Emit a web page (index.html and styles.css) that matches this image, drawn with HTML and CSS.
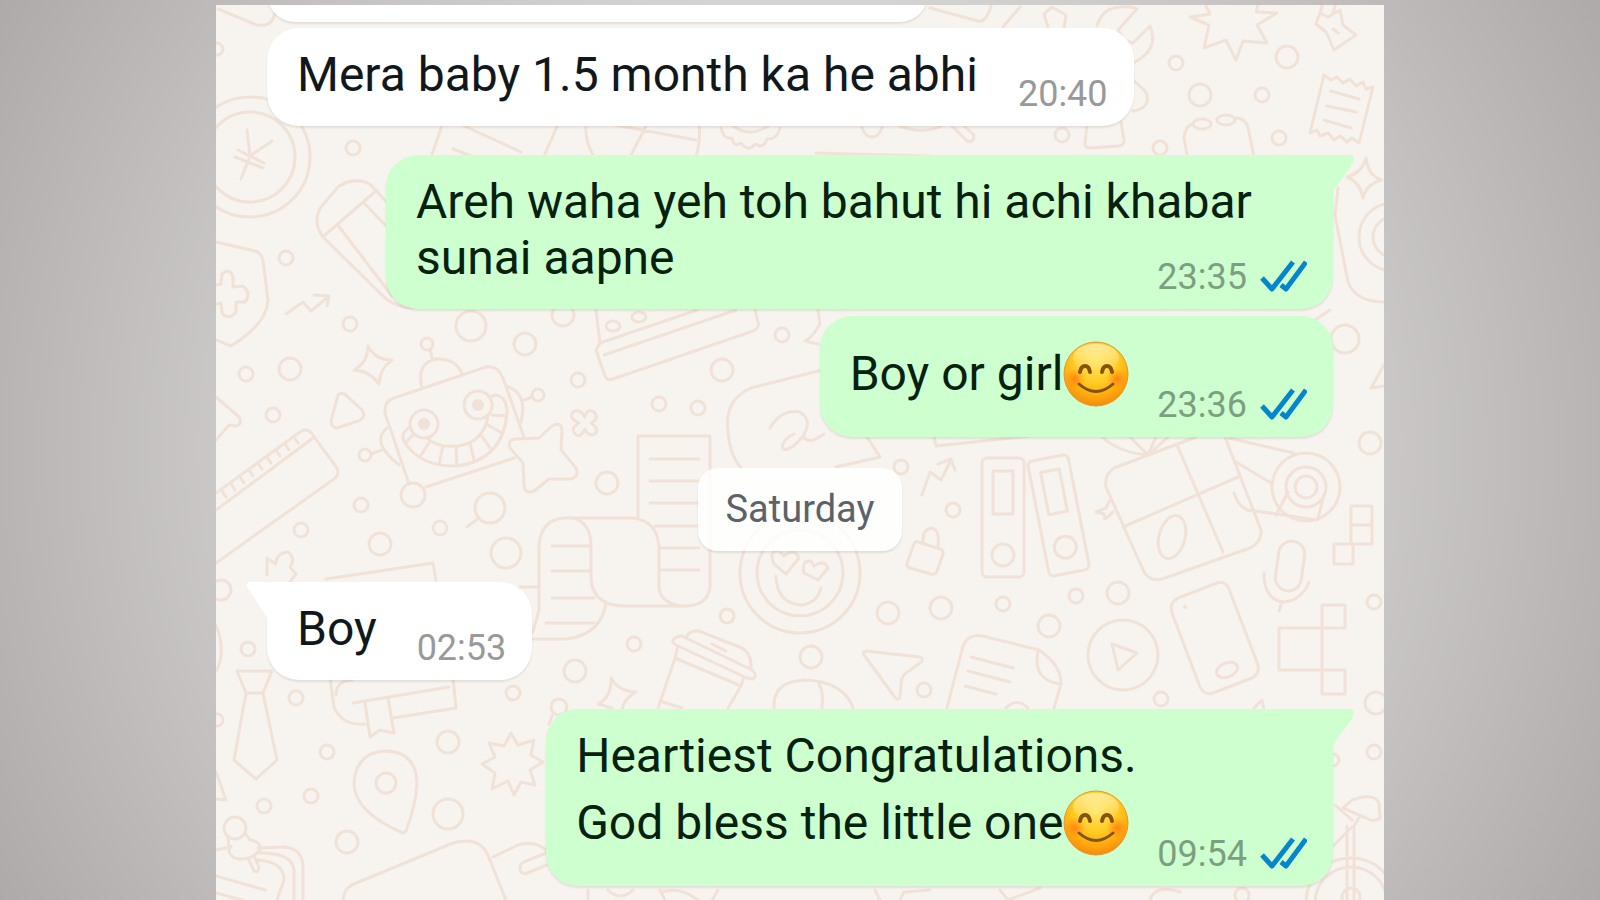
FILE: index.html
```html
<!DOCTYPE html>
<html lang="en">
<head>
  <meta charset="UTF-8" />
  <meta name="viewport" content="width=device-width, initial-scale=1.0"/>
  <title>Chat</title>
  <link rel="stylesheet" href="styles.css">
</head>
<body>
  <!-- Shared icons -->
  <svg class="defs" width="0" height="0" aria-hidden="true">
    <defs>
      <radialGradient id="face" cx="50%" cy="30%" r="70%">
        <stop offset="0" stop-color="#ffe45e"/>
        <stop offset="0.5" stop-color="#ffcb22"/>
        <stop offset="0.8" stop-color="#ffa60c"/>
        <stop offset="1" stop-color="#f08a10"/>
      </radialGradient>
      <radialGradient id="cheek">
        <stop offset="0" stop-color="#ff7a12" stop-opacity="0.85"/>
        <stop offset="1" stop-color="#ff8a10" stop-opacity="0"/>
      </radialGradient>
      <linearGradient id="shine" x1="0" y1="0" x2="0" y2="1">
        <stop offset="0" stop-color="#fff6c4" stop-opacity="0.7"/>
        <stop offset="1" stop-color="#fff6c4" stop-opacity="0"/>
      </linearGradient>
    </defs>
    <symbol id="smile" viewBox="0 0 66 66">
      <circle cx="33" cy="33" r="32" fill="url(#face)" stroke="#e29a2c" stroke-width="1"/>
      <ellipse cx="33" cy="17" rx="23" ry="14" fill="url(#shine)"/>
      <circle cx="12" cy="38" r="11" fill="url(#cheek)"/>
      <circle cx="54" cy="38" r="11" fill="url(#cheek)"/>
      <path d="M17 31 Q18 25 22 25 Q26 25 27 31 M39 31 Q40 25 44 25 Q48 25 49 31" fill="none" stroke="#85530f" stroke-width="4" stroke-linecap="round"/>
      <path d="M16 43 Q33 58 50 43" fill="none" stroke="#85530f" stroke-width="3" stroke-linecap="round"/>
    </symbol>
    <symbol id="ticks" viewBox="0 0 47 36">
      <path d="M2 19 L12 30 L33 3 M21 26 L26 30 L46 3" fill="none" stroke="#0785cc" stroke-width="5" stroke-linejoin="round"/>
    </symbol>
  </svg>

  <main class="chat">
    <!-- Wallpaper doodles -->
    <svg class="wallpaper" viewBox="216 5 1168 895" preserveAspectRatio="xMidYMin slice" aria-hidden="true">
      <!-- bubbles -->
      <g>
        <circle cx="350" cy="324" r="7"/><circle cx="471" cy="326" r="15"/><circle cx="525" cy="344" r="11"/>
        <circle cx="563" cy="315" r="11"/><circle cx="246" cy="374" r="7"/><circle cx="290" cy="369" r="11"/>
        <circle cx="273" cy="415" r="7"/><circle cx="578" cy="380" r="7"/><circle cx="659" cy="404" r="7"/>
        <circle cx="698" cy="408" r="7"/><circle cx="722" cy="370" r="11"/><circle cx="782" cy="335" r="7"/>
        <circle cx="607" cy="483" r="11"/><circle cx="361" cy="505" r="7"/><circle cx="490" cy="508" r="15"/>
        <circle cx="301" cy="530" r="7"/><circle cx="440" cy="528" r="7"/><circle cx="380" cy="544" r="11"/>
        <circle cx="506" cy="553" r="15"/><circle cx="221" cy="590" r="10"/><circle cx="727" cy="616" r="7"/>
        <circle cx="353" cy="148" r="7"/><circle cx="286" cy="258" r="7"/><circle cx="217" cy="49" r="6"/>
        <circle cx="1176" cy="63" r="7"/><circle cx="1287" cy="57" r="11"/><circle cx="1200" cy="95" r="11"/>
        <circle cx="1262" cy="95" r="7"/><circle cx="1062" cy="135" r="7"/><circle cx="1160" cy="148" r="7"/>
        <circle cx="1279" cy="138" r="7"/><circle cx="1345" cy="339" r="14"/><circle cx="1370" cy="443" r="11"/>
        <circle cx="901" cy="467" r="7"/><circle cx="953" cy="510" r="7"/><circle cx="888" cy="613" r="11"/>
        <circle cx="941" cy="608" r="11"/><circle cx="1003" cy="604" r="7"/><circle cx="1076" cy="596" r="7"/>
        <circle cx="1118" cy="593" r="11"/><circle cx="1049" cy="626" r="11"/><circle cx="1374" cy="602" r="7"/>
        <circle cx="248" cy="649" r="7"/><circle cx="296" cy="698" r="7"/><circle cx="513" cy="693" r="7"/>
        <circle cx="575" cy="671" r="11"/><circle cx="634" cy="644" r="7"/><circle cx="327" cy="752" r="7"/>
        <circle cx="448" cy="742" r="11"/><circle cx="311" cy="796" r="7"/><circle cx="264" cy="806" r="7"/>
        <circle cx="448" cy="814" r="15"/><circle cx="347" cy="842" r="11"/><circle cx="217" cy="720" r="6"/>
        <circle cx="559" cy="707" r="8"/><circle cx="811" cy="657" r="11"/><circle cx="924" cy="690" r="7"/>
        <circle cx="1161" cy="699" r="7"/><circle cx="1376" cy="703" r="11"/><circle cx="1374" cy="752" r="7"/>
        <circle cx="1242" cy="895" r="7"/><circle cx="1333" cy="760" r="6"/>
        <path d="M479 518 L467 527"/>
      </g>
      <!-- coin -->
      <circle cx="250" cy="157" r="60"/><circle cx="250" cy="157" r="45"/>
      <path d="M247 130 L250 156 L272 141 M250 156 L241 179 M235 157 L263 168 M238 150 L264 163"/>
      <path d="M218 9 L257 25 Q272 28 275 13"/>
      <!-- phone -->
      <path d="M414 308 Q398 308 385 298 L323 237 Q312 222 321 207 L338 187 Q354 176 370 184 L392 208 M325 235 L377 190 M363 202 L392 232 M337 224 L392 296"/>
      <!-- shield and arrow -->
      <path d="M216 242 L255 251 Q262 253 263 261 L268 300 Q267 324 231 346 L216 340"/>
      <path d="M216 285 L221 284 L222 274 Q230 267 233 277 L233 287 L243 286 Q252 293 245 302 L236 302 L236 312 Q229 321 222 313 L221 303 L216 304"/>
      <path d="M286 314 L303 302 L311 311 L328 297 M314 295 L329 296 L327 306"/>
      <!-- strip under the first message -->
      <path d="M444 120 L431 157 M460 124 L521 152 M560 120 L544 156 M453 149 L474 157 M586 120 Q584 140 594 157 M615 125 L696 140 M646 126 L630 157 M699 120 Q701 140 696 157"/>
      <path d="M721 128 Q724 140 732 138 Q734 148 741 143 Q749 153 755 144 Q764 149 767 139 Q777 140 780 128 M733 126 Q750 138 768 126"/>
      <path d="M861 124 Q864 137 872 137 Q880 137 883 124 M900 126 Q925 136 945 124 M950 124 L967 141 Q974 143 974 135 L962 124 M816 153 L930 156"/>
      <path d="M1087 122 L1085 144 Q1085 148 1090 148 L1118 146 Q1124 146 1124 140 L1121 122 M1187 155 L1184 138 Q1185 126 1193 124"/>
      <ellipse cx="1202" cy="124" rx="9" ry="5"/><ellipse cx="1226" cy="120" rx="9" ry="5"/>
      <path d="M1235 118 Q1246 118 1248 128 L1254 156"/>
      <!-- receipt -->
      <path d="M1324 75 L1331 80 L1337 77 L1343 83 L1350 79 L1356 86 L1363 82 L1366 89 L1373 87 L1359 143 L1352 138 L1347 142 L1340 136 L1334 140 L1328 133 L1320 136 L1317 130 L1310 133 Z M1331 91 L1359 99 M1327 106 L1356 112 M1324 120 L1351 128"/>
      <!-- wrench, burst, pin -->
      <path d="M1097 26 Q1102 8 1120 7 Q1132 6 1137 9 L1118 30 Q1124 42 1133 43 L1150 26 Q1160 50 1133 63 M1131 78 L1146 92 Q1152 108 1133 111"/>
      <path d="M1206 6 L1210 14 L1190 17 L1209 25 L1204 48 L1226 40 L1236 60 L1243 41 L1267 43 L1257 25 L1277 13 L1256 12 L1258 5"/>
      <path d="M1322 6 L1320 13 L1328 17 L1340 10 L1343 25 L1356 35 L1334 50 L1326 32 L1316 24 L1320 13 M1335 6 L1333 13 M1333 29 L1338 33"/>
      <path d="M930 8 L978 21 Q986 23 991 6 M1020 7 L1003 27 M1048 27 L1044 14 L1052 7 L1066 15 L1064 28"/>
      <!-- right edge -->
      <path d="M1366 158 Q1368 176 1382 180 Q1366 184 1363 198 Q1360 182 1347 177 Q1362 173 1366 158 Z"/>
      <path d="M1338 188 L1335 215 L1348 282 Q1356 302 1384 302"/>
      <circle cx="1393" cy="237" r="34"/><circle cx="1393" cy="237" r="20"/>
      <path d="M1330 310 L1312 322 M818 310 L820 324 Q812 338 805 341 L818 344 M1384 365 L1371 388 L1384 386"/>
      <!-- sparkle, play, arrow -->
      <path d="M368 346 Q375 360 392 360 Q380 368 379 384 Q370 371 354 370 Q368 362 368 346 Z"/>
      <path d="M338 395 Q343 391 348 397 L362 410 Q367 417 358 421 L337 428 Q331 427 331 421 Z"/>
      <path d="M216 397 L239 417 Q243 424 236 426 L229 425 L216 440"/>
      <!-- ruler -->
      <path d="M216 493 L300 432 Q307 427 312 434 L337 468 Q340 475 334 479 L216 563 M216 510 L313 438"/>
      <path d="M222 491 L226 497 M231 484 L235 490 M240 477 L244 483 M249 470 L253 476 M258 463 L262 469 M267 457 L271 463 M276 450 L280 456 M285 444 L289 450 M294 437 L298 443"/>
      <!-- robot -->
      <path d="M409 484 L385 413 Q384 401 394 398 L486 367 Q498 365 503 378 L524 437 M514 458 L426 487 M422 388 Q416 363 436 359 Q456 358 462 374 M430 350 L433 360"/>
      <path d="M506 386 Q528 392 521 422 M387 428 Q370 442 399 465 M524 400 L532 397 M371 454 L382 450"/>
      <circle cx="427" cy="344" r="6"/><circle cx="538" cy="395" r="6"/><circle cx="365" cy="455" r="6"/><circle cx="413" cy="495" r="12"/>
      <circle cx="424" cy="424" r="14"/><circle cx="478" cy="405" r="14"/>
      <circle class="solid" cx="424" cy="424" r="6"/><circle class="solid" cx="478" cy="405" r="6"/>
      <path d="M410 427 Q399 434 405 443 Q421 467 457 466 Q503 460 507 413 Q507 396 495 395 L489 397 M427 438 Q437 448 458 446 Q484 442 488 416 M492 415 L506 416 M488 425 L502 433 M481 435 L490 448 M470 443 L474 460 M456 447 L457 465 M443 446 L439 464 M430 441 L420 457 M414 434 L406 442"/>
      <!-- star and flower -->
      <path d="M539 438 L552 426 Q561 421 562 430 L561 450 L576 468 Q580 478 569 479 L549 479 L534 491 Q524 495 524 484 L523 463 L510 448 Q507 439 516 439 Z"/>
      <path d="M585 417 Q587 408 594 412 Q600 418 591 423 Q600 429 595 434 Q588 437 585 429 Q580 439 575 434 Q570 428 579 423 Q568 418 573 412 Q580 408 585 417 Z"/>
      <!-- typewriter -->
      <path d="M596 310 L600 343 L596 350 L605 376 Q607 381 613 379 L753 331 Q760 328 758 322 L755 310 M604 355 L736 310 M600 343 L697 310"/>
      <ellipse cx="613" cy="326" rx="7" ry="5"/><ellipse cx="639" cy="317" rx="7" ry="5"/>
      <!-- cloud with swirl -->
      <path d="M822 370 L751 388 Q724 400 728 430 Q729 454 741 468 M770 428 Q781 409 800 412 Q813 420 803 436 Q790 452 783 449 Q780 441 794 434 M803 436 Q808 446 824 434 M867 437 L880 457 L836 467"/>
      <!-- scroll -->
      <path d="M638 518 V436 H710 V587 Q708 606 684 606 Q660 604 659 587 V547 Q657 520 632 518 H564 Q540 520 539 547 V610 L533 632 M573 518 Q591 522 591 547 V580 Q594 606 625 606 H684 M606 602 Q602 634 567 639 H533"/>
      <path d="M650 459 H699 M650 481 H699 M650 503 H699 M655 526 H699 M660 548 H699 M660 570 H699 M552 546 H590 M552 571 H590 M552 598 H594 M546 623 H594 M520 587 H537"/>
      <!-- heart eyes -->
      <circle cx="800" cy="573" r="60"/><circle cx="800" cy="573" r="43"/>
      <path d="M786 574 L774 564 Q768 550 779 551 L784 556 Q794 547 799 558 Z M818 580 L804 573 Q801 560 811 561 L814 566 Q824 559 828 568 Z M776 576 Q777 604 802 605 Q818 602 821 588"/>
      <!-- lock and arrow -->
      <path d="M918 542 L940 549 Q944 550 943 554 L937 571 Q936 575 931 574 L910 568 Q906 567 907 563 L914 544 Q915 541 918 542 Z M923 543 Q922 529 932 528 Q940 530 938 547"/>
      <path d="M922 495 L930 472 L941 480 L951 460 M938 464 L951 459 L955 470"/>
      <!-- binders -->
      <rect x="982" y="458" width="42" height="119" rx="5"/><rect x="993" y="471" width="20" height="43"/><circle cx="1003" cy="555" r="11"/>
      <g transform="rotate(-11 1058 515)">
        <rect x="1038" y="457" width="41" height="117" rx="5"/><rect x="1049" y="470" width="19" height="43"/><circle cx="1059" cy="548" r="11"/>
      </g>
      <!-- gift -->
      <path d="M1225 437 L1261 530 Q1262 542 1250 548 L1162 579 Q1150 582 1144 572 L1106 487 Q1104 475 1114 468 L1196 437 M1177 445 L1223 552 M1123 527 L1238 477 M1102 437 Q1120 453 1148 455 L1168 437 M1130 437 L1148 455 L1156 437 M934 437 L936 446 L1030 436"/>
      <ellipse cx="1172" cy="537" rx="13" ry="22" transform="rotate(15 1172 537)"/>
      <path d="M1110 500 L1106 508 L1096 512 L1104 514 L1105 519 L1113 512"/>
      <!-- tape -->
      <circle cx="1306" cy="487" r="34"/><circle cx="1306" cy="487" r="20"/><circle cx="1306" cy="487" r="11"/>
      <path d="M1229 438 L1294 453 M1236 462 L1271 483 M1234 493 Q1240 512 1256 511 L1317 520 M1288 492 L1276 515 M1324 495 L1318 518"/>
      <!-- blocks and mic -->
      <path d="M1351 506 H1372 V525 H1351 Z M1351 525 H1372 V544 H1351 Z M1334 544 H1353 V564 H1334 Z"/>
      <rect x="1277" y="541" width="26" height="50" rx="13" transform="rotate(8 1290 566)"/>
      <path d="M1264 573 Q1264 600 1284 602 Q1302 600 1309 582 M1282 602 L1279 611"/>
      <path d="M1279 628 H1345 V605 H1322 V694 H1345 V670 H1279 Z"/>
      <!-- phone, play, send, page -->
      <path d="M1178 598 L1217 583 Q1225 580 1229 589 L1258 665 Q1260 674 1252 678 L1213 693 Q1205 696 1200 687 L1172 613 Q1169 603 1178 598 Z"/>
      <ellipse cx="1227" cy="670" rx="11" ry="7" transform="rotate(-22 1227 670)"/><circle class="solid" cx="1185" cy="607" r="2"/>
      <circle cx="1123" cy="655" r="35"/><path d="M1112 644 L1137 653 L1118 670 Z"/>
      <path d="M866 651 L920 657 Q925 659 920 663 L906 673 Q901 677 901 684 L900 697 Q898 702 894 696 L864 655 Q862 651 866 651 Z"/>
      <path d="M947 708 L963 646 Q968 633 983 636 L1039 650 Q1062 666 1061 684 L1054 708 M1038 651 Q1032 680 1060 684 M971 657 L1013 668 M968 671 L1010 682 M965 686 L996 694 M1006 708 Q1017 697 1028 708"/>
      <!-- cup, hat, sparkle -->
      <path d="M675 638 Q681 634 686 638 L752 670 Q758 675 753 679 L747 678 L676 645 Q670 642 675 638 Z M686 637 Q690 630 699 631 L742 648 Q752 654 751 669 M678 646 L675 658 L741 686 L744 677 M675 658 L658 708 M741 686 L728 708 M660 701 L682 708 M712 644 L726 651"/>
      <path d="M774 708 Q772 681 806 680 Q844 682 853 708 M819 684 Q824 692 822 708"/>
      <path d="M611 678 Q618 691 636 692 Q624 698 622 710 M611 678 Q612 697 598 704 L612 708 M552 716 L549 724"/>
      <!-- book -->
      <path d="M330 678 L334 707 Q342 726 365 724 M336 695 Q336 681 352 680 M453 678 L456 708 L393 718 M353 703 L449 687 M365 703 L370 737 L380 730 L394 733 L388 698"/>
      <!-- tie, pin, burst -->
      <path d="M237 671 H272 L263 693 H246 Z M246 693 L234 760 L256 779 L277 760 L263 693 M216 625 Q226 650 217 670 M216 772 L226 800 L216 799"/>
      <circle cx="386" cy="783" r="10"/><path d="M403 833 Q354 812 354 783 Q356 752 386 751 Q416 752 417 783 Q416 805 406 831 Z"/>
      <path d="M511 733 L518 745 L534 740 L531 755 L543 762 L530 770 L535 785 L521 782 L514 795 L508 781 L492 789 L495 773 L482 764 L495 757 L489 743 L504 746 Z"/>
      <!-- bottom left -->
      <circle cx="235" cy="828" r="11"/>
      <path d="M228 837 L229 848 M245 833 L250 840 Q261 841 260 850 Q250 862 234 858 Q226 852 231 846 M248 858 L254 871 Q259 873 259 867 L254 856 M216 850 L230 847 M258 848 L285 847 Q302 849 303 866 V900 M258 853 Q292 852 294 870 V900 M258 860 Q284 862 284 880 L277 900 M216 876 L265 890 M216 893 L242 900"/>
      <path d="M343 900 Q344 888 354 884 L453 843 Q478 836 487 853 L506 900 M493 857 L518 845 Q534 840 546 850 M546 853 L524 862 Q518 865 521 872 L525 874 L549 864"/>
      <path d="M588 890 V900 M608 890 Q620 902 633 890 M660 890 L665 900 M662 892 Q680 886 698 900 M718 890 L712 900 M1150 900 Q1155 884 1180 892 M875 890 L880 900 M900 900 L904 892 L930 890 M1000 890 L1008 900 L1040 888"/>
      <path d="M267 575 V558 L276 564 Q276 553 288 552 Q296 558 290 567 L296 574 L290 582 M326 579 L433 563 L436 580 M1254 708 L1262 700 L1264 710"/>
      <!-- bicycle -->
      <path d="M1343 808 L1352 800 Q1374 792 1379 803 L1380 818 Q1374 823 1366 818 L1352 812 Z M1360 816 L1354 826 V900 M1347 826 V900 M1352 820 L1335 805 M1352 827 L1333 846"/>
      <circle cx="1351" cy="903" r="45"/><circle cx="1351" cy="903" r="36"/><circle cx="1351" cy="897" r="9"/>
    </svg>

    <div class="bubble in cut"></div>

    <div class="bubble in">
      <p>Mera baby 1.5 month ka he abhi<span class="meta"><time>20:40</time></span></p>
    </div>

    <div class="bubble out tail first">
      <p>Areh waha yeh toh bahut hi achi khabar sunai aapne<span class="meta"><time>23:35</time><svg class="ticks" role="img" aria-label="Read"><use href="#ticks"/></svg></span></p>
    </div>

    <div class="bubble out has-emoji">
      <p>Boy or girl<svg class="emoji" role="img" aria-label="Smile"><use href="#smile"/></svg><span class="meta"><time>23:36</time><svg class="ticks" role="img" aria-label="Read"><use href="#ticks"/></svg></span></p>
    </div>

    <div class="day">Saturday</div>

    <div class="bubble in tail">
      <p>Boy<span class="meta"><time>02:53</time></span></p>
    </div>

    <div class="bubble out tail first has-emoji">
      <p>Heartiest Congratulations.<br>God bless the little one<svg class="emoji" role="img" aria-label="Smile"><use href="#smile"/></svg><span class="meta"><time>09:54</time><svg class="ticks" role="img" aria-label="Read"><use href="#ticks"/></svg></span></p>
    </div>
  </main>
</body>
</html>
```

FILE: styles.css
```css
* {
  box-sizing: border-box;
}
body {
  margin: 0;
  padding-top: 5px;
  min-height: 100vh;
  font-family: Roboto, sans-serif;
  background: radial-gradient(circle farthest-corner at center, #fbfbfb 0%, #aeaaa9 100%);
}
.defs {
  position: absolute;
}
.chat {
  position: relative;
  display: flex;
  flex-direction: column;
  width: 73%;
  min-height: calc(100vh - 5px);
  margin: 0 auto;
  padding: 0 51px 11px;
  overflow: hidden;
  background: #f7f3ee;
}
.wallpaper {
  position: absolute;
  top: 0;
  left: 0;
  width: 100%;
  height: 100%;
  fill: none;
  stroke: #f1e2d7;
  stroke-width: 3;
  stroke-linecap: round;
  stroke-linejoin: round;
}
.wallpaper .solid {
  fill: #f1e2d7;
  stroke: none;
}

/* Messages */
.bubble {
  position: relative;
  max-width: 947px;
  padding: 19px 26px 23px 30px;
  border-radius: 32px;
  font-size: 48px;
  line-height: 56px;
  box-shadow: 0 2px 2px rgba(90, 80, 70, 0.12);
}
.bubble p {
  margin: 0;
}
.in {
  align-self: flex-start;
  background: #fff;
  color: #11181c;
}
.out {
  align-self: flex-end;
  margin-top: 7px;
  background: #cdffcf;
  color: #06210d;
}
.first {
  margin-top: 29px;
}
.cut {
  width: 62%;
  height: 57px;
  margin: -40px 0 6px;
}

/* Tails */
.tail::before {
  content: "";
  position: absolute;
  top: 0;
  width: 53px;
  height: 36px;
  background: inherit;
}
.in.tail::before {
  left: -21px;
  clip-path: polygon(4% 0, 100% 0, 100% 100%, 40% 100%, 0 8%);
}
.out.tail::before {
  right: -21px;
  clip-path: polygon(0 0, 96% 0, 100% 8%, 98% 24%, 60% 100%, 0 100%);
}

/* Time and ticks */
.meta {
  float: right;
  display: flex;
  align-items: center;
  gap: 13px;
  margin: 26px 0 -20px 40px;
  font-size: 36px;
  line-height: 42px;
  color: #999;
}
.out .meta {
  margin-left: 28px;
  color: #7c9f80;
}
.has-emoji .meta {
  margin-top: 49px;
}
.ticks {
  width: 47px;
  height: 36px;
}
.emoji {
  width: 66px;
  height: 66px;
  margin: 6px 0 7px;
  vertical-align: -24px;
}

/* Day label */
.day {
  position: relative;
  align-self: center;
  margin: 31px 0;
  padding: 19px 28px;
  border-radius: 20px;
  background: rgba(255, 255, 255, 0.85);
  box-shadow: 0 2px 2px rgba(90, 80, 70, 0.12);
  font-size: 38px;
  line-height: 45px;
  color: #5b6368;
}
```
